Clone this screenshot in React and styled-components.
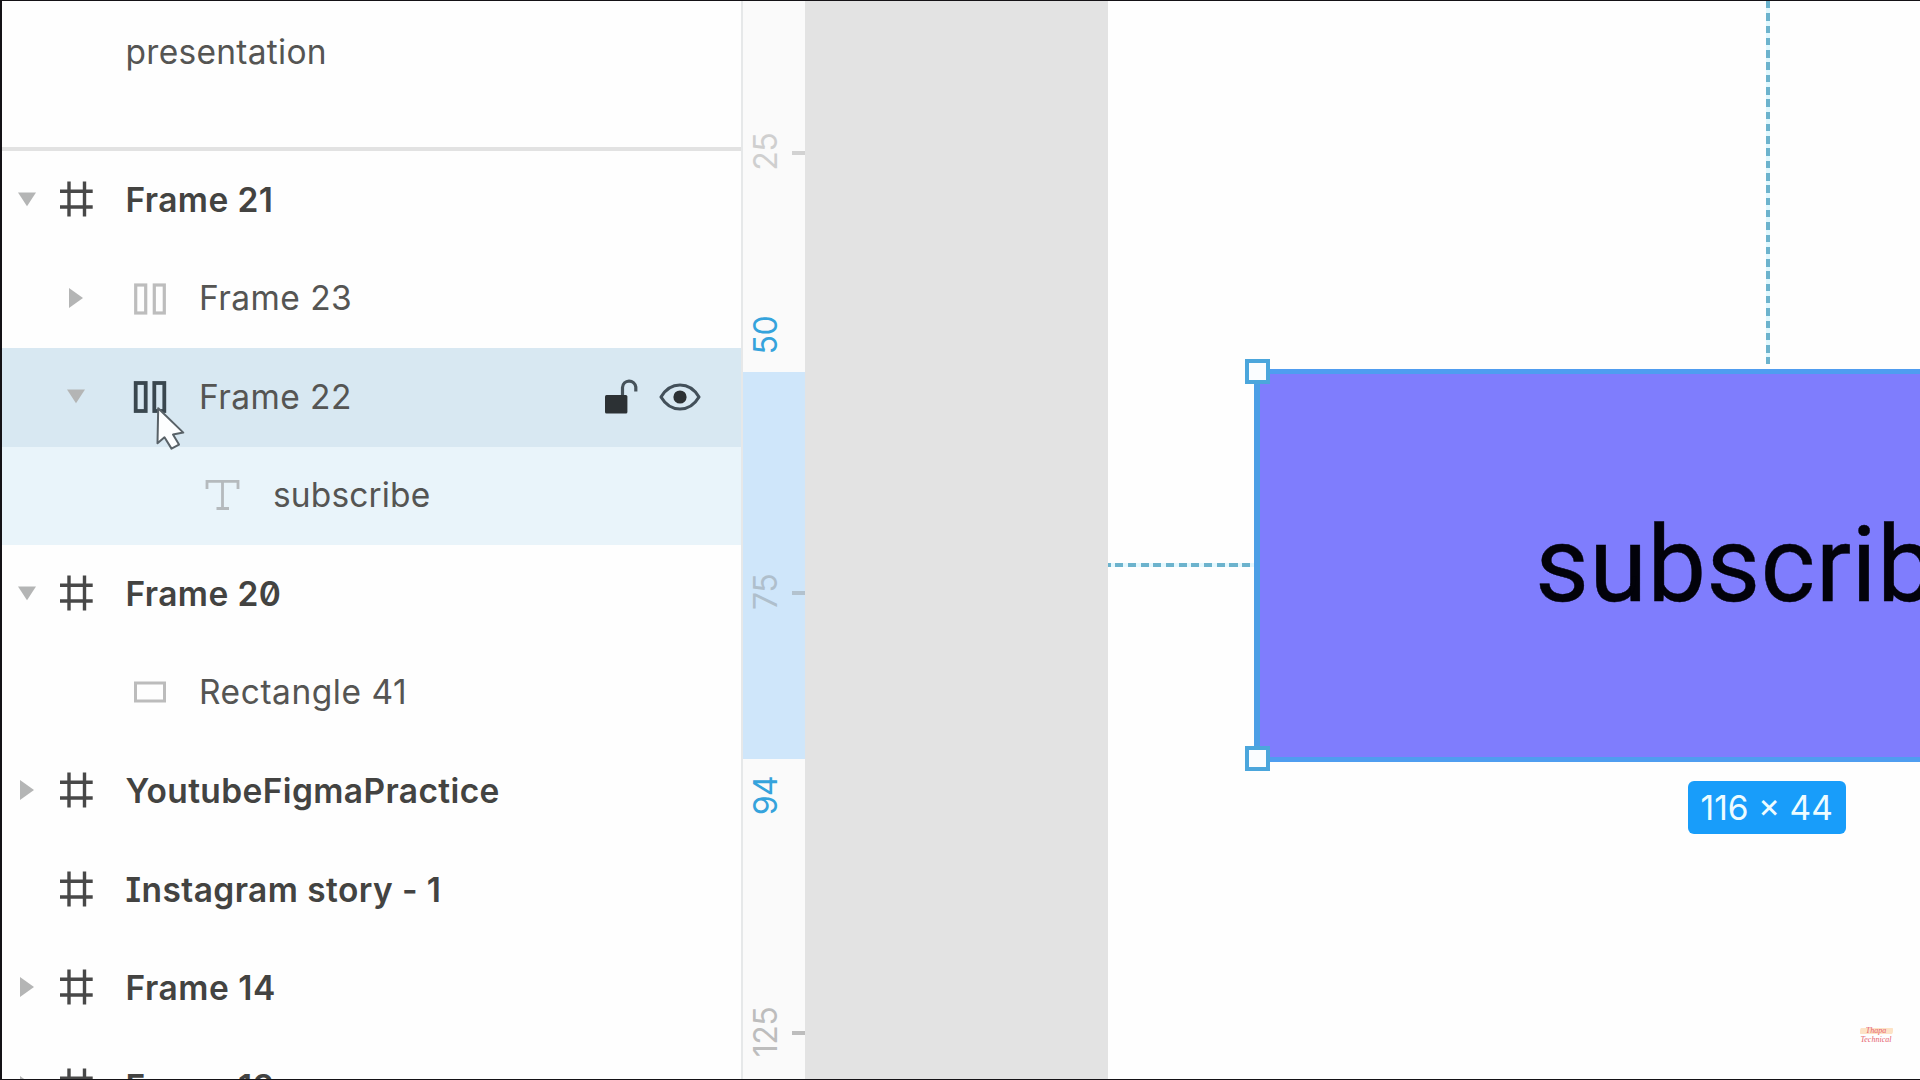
import React from "react";
import styled, { createGlobalStyle } from "styled-components";

const GlobalStyle = createGlobalStyle`
  * { box-sizing: border-box; }
  body { margin: 0; background: #fff; overflow: hidden; }
`;

const Screen = styled.div`
  display: flex;
  width: 1920px;
  height: 1080px;
  overflow: hidden;
  border-style: solid;
  border-color: #141216;
  border-width: 1px 0 1px 2px;
  background: #fefefe;
  font-family: "Inter", "Liberation Sans", sans-serif;
`;

const Sidebar = styled.aside`
  flex: none;
  width: 739px;
  height: 1080px;
  overflow: hidden;
  background: #fefefe;
`;

const PageItem = styled.div`
  height: 150px;
  padding: 30px 0 0 123.5px;
  border-bottom: 4px solid #e2e2e2;
  font-size: 33.5px;
  line-height: 42px;
  letter-spacing: 0.28px;
  color: #555553;
`;

const Row = styled.div`
  display: grid;
  grid-template-columns: ${(p) => p.$cols};
  align-items: center;
  height: 98.5px;
  background: ${(p) => p.$bg || "transparent"};
`;

const Slot = styled.div`
  display: flex;
  align-items: center;
  justify-content: center;
  height: 50px;
  padding-bottom: 2px;
`;

const Name = styled.span`
  grid-column: 5;
  padding-bottom: ${(p) => (p.$bold ? 0 : 1.4)}px;
  font-size: 33.5px;
  line-height: 42px;
  font-weight: ${(p) => (p.$bold ? 600 : 400)};
  font-feature-settings: "zero", "cv08";
  letter-spacing: ${(p) => p.$ls || 0}px;
  color: ${(p) => (p.$bold ? "#434341" : "#555553")};
  white-space: nowrap;
`;

const Actions = styled.div`
  display: flex;
  align-items: center;
  gap: 21px;
  padding-right: 40px;
`;

const Ruler = styled.div`
  display: flex;
  flex-direction: column;
  flex: none;
  width: 64px;
  border-left: 2px solid #e6e8e9;
  background: #fafafa;
`;

const Segment = styled.div`
  flex: none;
  display: flex;
  flex-direction: column;
  height: ${(p) => p.$h}px;
  padding-top: ${(p) => p.$top}px;
  gap: ${(p) => p.$gap || 0}px;
  background: ${(p) => (p.$active ? "#cfe6fa" : "transparent")};
`;

const Mark = styled.div`
  display: flex;
  align-items: center;
  justify-content: space-between;
  height: 60px;
  flex: none;
`;

const MarkLabel = styled.span`
  width: 46px;
  padding-top: 2px;
  line-height: 46px;
  writing-mode: vertical-rl;
  transform: rotate(180deg);
  text-align: center;
  font-size: 32px;
  letter-spacing: -0.6px;
  color: ${(p) => p.$color};
`;

const Tick = styled.i`
  width: 13px;
  height: 4px;
  background: ${(p) => p.$color};
`;

const Canvas = styled.main`
  display: flex;
  flex: 1;
  padding-left: 303px;
  background: #e3e3e3;
`;

const Artboard = styled.section`
  position: relative;
  flex: 1;
  background: #fefefe;
  overflow: hidden;
`;

const ButtonFrame = styled.div`
  position: absolute;
  left: 146px;
  top: 368px;
  width: 1029px;
  height: 393px;
  padding: 0 0 0 275px;
  display: flex;
  align-items: center;
  background: #7f7dfd;
  border: 5px solid #4f9df0;
  border-left: 6px solid #4c9fe6;
  font-family: "Roboto", "Liberation Sans", sans-serif;
  font-size: 104.8px;
  line-height: 124px;
  letter-spacing: 0.2px;
  color: #02020a;
  -webkit-text-stroke: 0.4px #02020a;
`;

const Handle = styled.i`
  position: absolute;
  left: 137px;
  top: ${(p) => p.$y}px;
  width: 25px;
  height: 25px;
  border: 4px solid #4ba6dc;
  background: #fafdff;
`;

const GuideH = styled.i`
  position: absolute;
  left: 0;
  top: 562px;
  width: 146px;
  height: 4px;
  background: repeating-linear-gradient(90deg, #6cb3cd 0 8.2px, #e4f8fe 8.2px 12.67px);
  background-position-x: -5.4px;
  background-size: 200px 4px;
`;

const GuideV = styled.i`
  position: absolute;
  left: 658px;
  top: 0;
  width: 4px;
  height: 363px;
  background: repeating-linear-gradient(180deg, #6cb3cd 0 7.5px, #e0f8fe 7.5px 12.29px);
`;

const SizeBadge = styled.div`
  position: absolute;
  left: 580px;
  top: 780px;
  width: 157.5px;
  height: 53px;
  border-radius: 6px;
  background: #189dfa;
  color: #eefcff;
  font-size: 33.5px;
  line-height: 54px;
  text-align: center;
  white-space: nowrap;
`;

const Watermark = styled.div`
  position: absolute;
  left: 748px;
  top: 1026px;
  width: 40px;
  display: flex;
  flex-direction: column;
  align-items: center;
  font: italic 8px/9px "Liberation Serif", serif;
  color: #e5606c;
`;

const Brush = styled.span`
  width: 33px;
  height: 8px;
  line-height: 7px;
  text-align: center;
  border-radius: 4px 2px;
  background: linear-gradient(180deg, transparent 1px, #fde3c6 1px 7px, transparent 7px);
`;

const Pointer = styled.svg`
  position: absolute;
  left: 151.5px;
  top: 400px;
`;

const Caret = ({ open }) => (
  <svg width="20" height="22" viewBox="0 0 20 22" fill="#b4b5b5">
    {open ? <path d="M1 4.5H19L10 18.2Z" /> : <path d="M3 1V21L17 11Z" />}
  </svg>
);

const HashIcon = () => (
  <svg width="34" height="36" viewBox="0 0 34 36" fill="none" stroke="#484848" strokeWidth="3.4">
    <path d="M9 .5V35.5M24.500 .5V35.5M0 10.3H32.700M0 26H32.700" />
  </svg>
);

const ColumnsIcon = ({ active }) => (
  <svg width="34" height="34" viewBox="0 0 34 34" fill="none" stroke={active ? "#3a474f" : "#bdbdbd"} strokeWidth={active ? 3.8 : 3.2}>
    <rect x="2.7" y="4" width="10" height="28" />
    <rect x="21.3" y="4" width="10" height="28" />
  </svg>
);

const TextIcon = () => (
  <svg width="36" height="32" viewBox="0 0 36 32" fill="none" stroke="#b5babd" strokeWidth="2.8">
    <path d="M2 10V2.3H33V10M17.500 2.3V29.500M11.500 29.500H24" />
  </svg>
);

const RectIcon = () => (
  <svg width="34" height="24" viewBox="0 0 34 24" fill="none" stroke="#bcbcbc" strokeWidth="3">
    <rect x="2.5" y="3" width="29" height="18" />
  </svg>
);

const LockIcon = () => (
  <svg width="34" height="38" viewBox="0 0 34 38">
    <rect x="1" y="17" width="22.4" height="18.6" rx="1.5" fill="#2c3134" />
    <path d="M18.5 17V9.5A6.7 7 0 0 1 31.8 9V13.5" fill="none" stroke="#46525a" strokeWidth="3.2" />
  </svg>
);

const EyeIcon = () => (
  <svg width="42" height="30" viewBox="0 0 42 30">
    <path d="M2 15C7 6.5 13.500 3 21 3S35 6.500 40 15C35 23.500 28.500 27 21 27S7 23.500 2 15Z" fill="none" stroke="#43505a" strokeWidth="3.1" strokeLinejoin="round" />
    <circle cx="21" cy="15" r="6.6" fill="#2c3134" />
  </svg>
);

const icons = { hash: HashIcon, columns: ColumnsIcon, text: TextIcon, rect: RectIcon };

const columns = [
  "0 50px 49px 24.5px 1fr auto",
  "49px 50px 24px 74px 1fr auto",
  "196px 49px 0 26px 1fr auto",
];

const layers = [
  { level: 0, caret: "open", icon: "hash", name: "Frame 21", ls: 0.4 },
  { level: 1, caret: "closed", icon: "columns", name: "Frame 23", ls: 0.45 },
  { level: 1, caret: "open", icon: "columns", name: "Frame 22", ls: 0.42, active: true, bg: "#d8e8f2" },
  { level: 2, icon: "text", name: "subscribe", ls: 0.15, bg: "#e9f4fa" },
  { level: 0, caret: "open", icon: "hash", name: "Frame 20", ls: 0.4 },
  { level: 1, icon: "rect", name: "Rectangle 41", ls: 0.55 },
  { level: 0, caret: "closed", icon: "hash", name: "YoutubeFigmaPractice", ls: 0.38 },
  { level: 0, icon: "hash", name: "Instagram story - 1", ls: 0.42 },
  { level: 0, caret: "closed", icon: "hash", name: "Frame 14", ls: 0.55 },
  { level: 0, caret: "closed", icon: "hash", name: "Frame 13", ls: 0.5 },
];

const CaretSlot = styled(Slot)`
  grid-column: 2;
`;

const iconColumns = ["3", "4", "2 / 4"];

const IconSlot = styled(Slot)`
  grid-column: ${(p) => iconColumns[p.$level]};
  grid-row: 1;
  padding-right: ${(p) => (p.$level === 1 ? 25 : 0)}px;
`;

function LayerRow({ layer }) {
  const Icon = icons[layer.icon];
  return (
    <Row $cols={columns[layer.level]} $bg={layer.bg}>
      {layer.caret && (
        <CaretSlot>
          <Caret open={layer.caret === "open"} />
        </CaretSlot>
      )}
      <IconSlot $level={layer.level}>
        <Icon active={layer.active} />
      </IconSlot>
      <Name $bold={layer.level === 0} $ls={layer.ls}>
        {layer.name}
      </Name>
      {layer.active && (
        <Actions>
          <LockIcon />
          <EyeIcon />
        </Actions>
      )}
    </Row>
  );
}

export default function App() {
  return (
    <>
      <GlobalStyle />
      <Screen>
        <Sidebar>
          <PageItem>presentation</PageItem>
          {layers.map((l) => (
            <LayerRow key={l.name} layer={l} />
          ))}
        </Sidebar>
        <Ruler>
          <Segment $h={371} $top={122} $gap={123}>
            <Mark>
              <MarkLabel $color="#cfcfcf">25</MarkLabel>
              <Tick $color="#d2d2d2" />
            </Mark>
            <Mark>
              <MarkLabel $color="#35a3dc">50</MarkLabel>
            </Mark>
          </Segment>
          <Segment $h={387} $top={191} $active>
            <Mark>
              <MarkLabel $color="#afbfcc">75</MarkLabel>
              <Tick $color="#b3c2ce" />
            </Mark>
          </Segment>
          <Segment $h={322} $top={8} $gap={176}>
            <Mark>
              <MarkLabel $color="#35a3dc">94</MarkLabel>
            </Mark>
            <Mark>
              <MarkLabel $color="#bdbdbd">125</MarkLabel>
              <Tick $color="#bdbdbd" />
            </Mark>
          </Segment>
        </Ruler>
        <Canvas>
          <Artboard>
            <GuideV />
            <GuideH />
            <ButtonFrame>subscribe</ButtonFrame>
            <Handle $y={358} />
            <Handle $y={745} />
            <SizeBadge>116 × 44</SizeBadge>
            <Watermark>
              <Brush>Thapa</Brush>
              <span>Technical</span>
            </Watermark>
          </Artboard>
        </Canvas>
      </Screen>
      <Pointer width="40" height="56" viewBox="0 0 40 56">
        <path d="M6.200 8.300L5.500 43.300L12.500 37.300L19.500 48.600L27 44.600L21 34.600L31.300 32.600Z" fill="#fdfeff" stroke="#596268" strokeWidth="2" strokeLinejoin="round" />
      </Pointer>
    </>
  );
}
